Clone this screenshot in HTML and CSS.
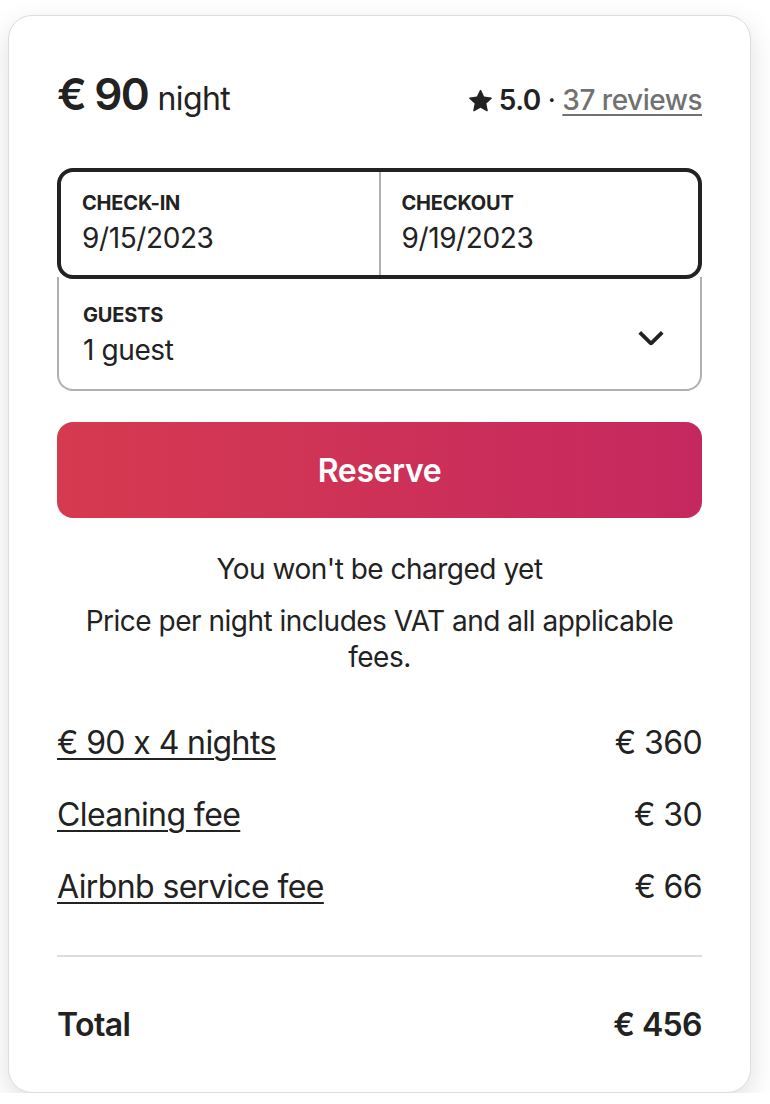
FILE: index.html
```html
<!DOCTYPE html>
<html>
<head>
<meta charset="utf-8">
<link rel="stylesheet" href="styles.css">
</head>
<body>
<div class="card">
  <div class="head">
    <div class="price"><span class="amount">€ 90</span> <span class="per">night</span></div>
    <div class="rating">
      <svg class="star" viewBox="0 0 32 32" width="23" height="23"><path d="M15.1 1.58l-4.13 8.88-9.86 1.27a1 1 0 0 0-.54 1.74l7.3 6.57-1.970 9.85a1 1 0 0 0 1.48 1.06l8.62-5 8.63 5a1 1 0 0 0 1.48-1.06l-1.97-9.85 7.3-6.57a1 1 0 0 0-.55-1.73l-9.86-1.28-4.120-8.88a1 1 0 0 0-1.82 0z" fill="#222"/></svg>
      <span class="score">5.0</span><span class="dot">·</span><span class="reviews">37 reviews</span>
    </div>
  </div>

  <div class="picker">
    <div class="dates">
      <div class="field">
        <div class="label">CHECK-IN</div>
        <div class="value">9/15/2023</div>
      </div>
      <div class="field field-right">
        <div class="label">CHECKOUT</div>
        <div class="value">9/19/2023</div>
      </div>
    </div>
    <div class="guests">
      <div class="field">
        <div class="label">GUESTS</div>
        <div class="value">1 guest</div>
      </div>
      <svg class="chev" viewBox="0 0 32 32" width="30" height="30"><path d="M28 11 16.7 22.3a1 1 0 0 1-1.4 0L4 11" fill="none" stroke="#222" stroke-width="4"/></svg>
    </div>
  </div>

  <button class="reserve">Reserve</button>

  <p class="note">You won't be charged yet</p>
  <p class="note vat">Price per night includes VAT and all applicable fees.</p>

  <div class="lines">
    <div class="line"><span class="u">€ 90 x 4 nights</span><span>€ 360</span></div>
    <div class="line"><span class="u">Cleaning fee</span><span>€ 30</span></div>
    <div class="line"><span class="u">Airbnb service fee</span><span>€ 66</span></div>
  </div>

  <div class="total"><span>Total</span><span>€ 456</span></div>
</div>
</body>
</html>
```
FILE: styles.css
```css
* { box-sizing: border-box; }
html, body { margin: 0; padding: 0; background: #fff; }
body {
  padding: 15px 0 0 8px;
  font-family: Inter, "Noto Sans", sans-serif;
  font-feature-settings: "calt" 0;
  color: #222;
}
.card {
  width: 743px;
  height: 1078px;
  border: 1px solid #dddddd;
  border-radius: 24px;
  padding: 48px;
  background: #fff;
  box-shadow: 0 10px 28px rgba(0,0,0,0.13);
}
.head {
  display: flex;
  justify-content: space-between;
  align-items: baseline;
  height: 56px;
  margin-top: 3px;
}
.amount { font-size: 44px; font-weight: 600; letter-spacing: -1.8px; }
.per { font-size: 32px; font-weight: 400; letter-spacing: -0.6px; margin-left: 5px; }
.rating { display: flex; align-items: baseline; font-size: 28px; letter-spacing: -0.5px; }
.star { align-self: center; margin-right: 8px; position: relative; top: 0; left: 4px; }
.score { font-weight: 600; margin-left: 3px; }
.dot { margin: 0 7px; }
.reviews { color: #717171; text-decoration: underline; text-underline-offset: 4px; font-weight: 500; }

.picker { margin-top: 45px; }
.dates {
  display: flex;
  border: 4px solid #222;
  border-radius: 16px;
  height: 111px;
  position: relative;
  z-index: 1;
}
.dates .field { flex: 1; padding: 18px 0 0 21px; }
.dates .field-right { border-left: 2px solid #b0b0b0; }
.label { font-size: 20px; font-weight: 700; letter-spacing: -0.2px; line-height: 26px; }
.value { font-size: 28px; line-height: 38px; margin-top: 3px; letter-spacing: -0.4px; }
.guests {
  display: flex;
  justify-content: space-between;
  align-items: center;
  border: 2px solid #b0b0b0;
  border-top: none;
  border-radius: 0 0 16px 16px;
  height: 114px;
  margin-top: -2px;
  padding: 0 34px 0 24px;
}
.guests .field { padding-top: 4px; }
.chev { position: relative; top: 4px; }

.reserve {
  display: block;
  width: 100%;
  height: 96px;
  margin-top: 31px;
  border: none;
  border-radius: 16px;
  background: linear-gradient(to right, #d63a50, #c5285f);
  color: #fff;
  font-family: inherit;
  font-size: 32px;
  font-weight: 600;
  letter-spacing: -0.4px;
}
.note { margin: 0; text-align: center; font-size: 28px; line-height: 36px; letter-spacing: -0.5px; }
.note:first-of-type { margin-top: 33px; }
.vat { margin-top: 16px; padding: 0 20px; }

.lines { margin-top: 48px; padding-bottom: 34px; border-bottom: 2px solid #dddddd; }
.line {
  display: flex;
  justify-content: space-between;
  font-size: 32px;
  line-height: 40px;
  margin-bottom: 32px;
  letter-spacing: -0.6px;
}
.line:last-child { margin-bottom: 14px; }
.u { text-decoration: underline; text-underline-offset: 4px; text-decoration-thickness: 2px; }
.total {
  display: flex;
  justify-content: space-between;
  font-size: 32px;
  font-weight: 600;
  margin-top: 48px;
  letter-spacing: -0.6px;
}
```
